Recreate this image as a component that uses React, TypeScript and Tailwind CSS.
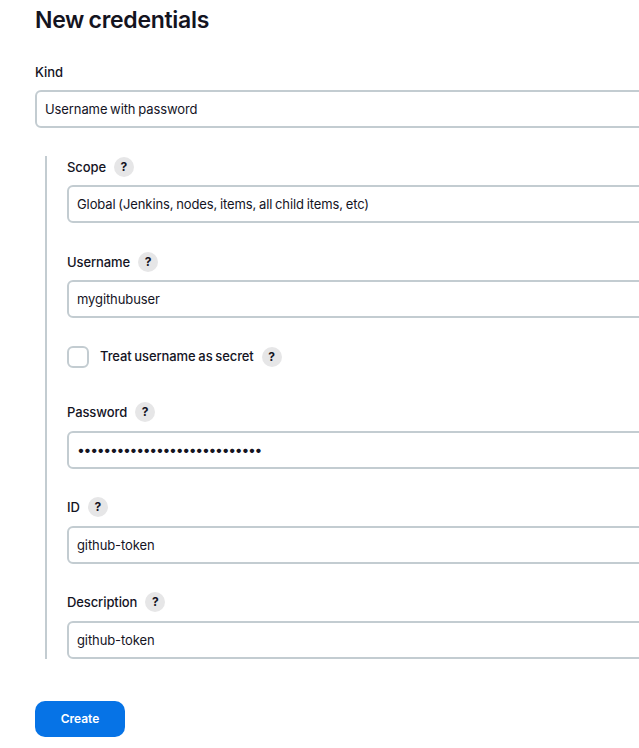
import React from 'react';

const HelpIcon = () => (
  <span className="flex h-5 w-5 items-center justify-center rounded-full bg-[#e6e6e7] text-xs font-bold tracking-normal text-[#14141f]">
    ?
  </span>
);

const Field = ({
  label,
  value,
  help = true,
  loose = false,
}: {
  label: string;
  value: string;
  help?: boolean;
  loose?: boolean;
}) => (
  <div>
    <div className="flex h-5 items-center gap-2 text-[13px] font-medium leading-5 tracking-[-0.1px]">
      <span>{label}</span>
      {help && <HelpIcon />}
    </div>
    <div
      className={`${loose ? 'mt-[9px]' : 'mt-2'} flex h-[38px] items-center rounded-md border-2 border-[#c3ccd1] bg-white px-2 pt-0.5 text-[13px] tracking-[-0.1px] [word-spacing:-0.8px]`}
    >
      {value}
    </div>
  </div>
);

export default function App() {
  return (
    <div className="h-[748px] w-[639px] overflow-hidden bg-white font-['Inter',sans-serif] text-[#14141f]">
      <div className="w-[720px] pl-[35px]">
        <h1 className="h-10 pt-[4px] text-[23px] font-semibold leading-8 tracking-[-0.3px] [word-spacing:-1px]">
          New credentials
        </h1>

        <div className="mt-[22px]">
          <Field label="Kind" value="Username with password" help={false} />
        </div>

        <div className="ml-[10px] mt-7 flex h-[503px] flex-col border-l-2 border-[#c3ccd1] pl-5">
          <div className="pt-[1px]">
            <Field label="Scope" value="Global (Jenkins, nodes, items, all child items, etc)" />
          </div>
          <div className="mt-[29px]">
            <Field label="Username" value="mygithubuser" />
          </div>
          <div className="mt-7 flex h-[22px] items-center text-[13px] font-medium tracking-[-0.1px] [word-spacing:-0.6px]">
            <span className="h-[22px] w-[22px] rounded-md border-2 border-[#c3ccd1] bg-white" />
            <span className="ml-[11px]">Treat username as secret</span>
            <span className="ml-2">
              <HelpIcon />
            </span>
          </div>
          <div className="mt-[34px]">
            <div className="flex h-5 items-center gap-2 text-[13px] font-medium leading-5 tracking-[-0.1px]">
              <span>Password</span>
              <HelpIcon />
            </div>
            <div className="mt-[9px] flex h-[38px] items-center rounded-md border-2 border-[#c3ccd1] bg-white px-2 text-sm tracking-[-1.3px]">
              ••••••••••••••••••••••••••••
            </div>
          </div>
          <div className="mt-7">
            <Field label="ID" value="github-token" loose />
          </div>
          <div className="mt-7">
            <Field label="Description" value="github-token" loose />
          </div>
        </div>

        <button className="mt-[42px] h-9 w-[90px] rounded-[10px] bg-[#0673e6] text-xs font-semibold text-white">
          Create
        </button>
      </div>
    </div>
  );
}
